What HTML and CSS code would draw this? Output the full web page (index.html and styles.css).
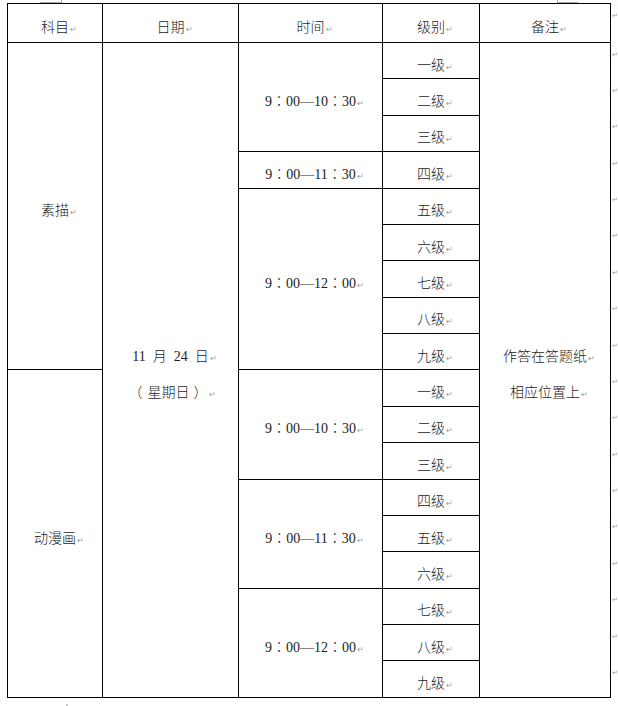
FILE: index.html
```html
<!DOCTYPE html>
<html lang="zh-CN">
<head>
<meta charset="utf-8">
<title>考试时间安排</title>
<link rel="stylesheet" href="styles.css">
</head>
<body>
<div class="page">
  <span class="corner corner-left"></span>
  <span class="corner corner-right"></span>
  <table class="grid">
    <colgroup>
      <col class="c-subject">
      <col class="c-date">
      <col class="c-time">
      <col class="c-level">
      <col class="c-note">
      <col class="c-eor">
    </colgroup>
    <tr class="head">
      <td><span class="t">科目</span></td>
      <td><span class="t">日期</span></td>
      <td><span class="t">时间</span></td>
      <td><span class="t">级别</span></td>
      <td><span class="t">备注</span></td>
      <td class="eor">↵</td>
    </tr>
    <tr class="r">
      <td rowspan="9"><span class="t">素描</span></td>
      <td rowspan="18" class="multi"><span class="t wide">11 月 24 日</span><br><span class="t"><span class="lp">（</span>星期日<span class="rp">）</span></span></td>
      <td rowspan="3"><span class="t punct">9：00—10：30</span></td>
      <td><span class="t">一级</span></td>
      <td rowspan="18" class="multi"><span class="t">作答在答题纸</span><br><span class="t">相应位置上</span></td>
      <td class="eor">↵</td>
    </tr>
    <tr class="r"><td><span class="t">二级</span></td><td class="eor">↵</td></tr>
    <tr class="r"><td><span class="t">三级</span></td><td class="eor">↵</td></tr>
    <tr class="r">
      <td><span class="t punct">9：00—11：30</span></td>
      <td><span class="t">四级</span></td>
      <td class="eor">↵</td>
    </tr>
    <tr class="r">
      <td rowspan="5"><span class="t punct">9：00—12：00</span></td>
      <td><span class="t">五级</span></td>
      <td class="eor">↵</td>
    </tr>
    <tr class="r"><td><span class="t">六级</span></td><td class="eor">↵</td></tr>
    <tr class="r"><td><span class="t">七级</span></td><td class="eor">↵</td></tr>
    <tr class="r"><td><span class="t">八级</span></td><td class="eor">↵</td></tr>
    <tr class="r"><td><span class="t">九级</span></td><td class="eor">↵</td></tr>
    <tr class="r">
      <td rowspan="9"><span class="t">动漫画</span></td>
      <td rowspan="3"><span class="t punct">9：00—10：30</span></td>
      <td><span class="t">一级</span></td>
      <td class="eor">↵</td>
    </tr>
    <tr class="r"><td><span class="t">二级</span></td><td class="eor">↵</td></tr>
    <tr class="r"><td><span class="t">三级</span></td><td class="eor">↵</td></tr>
    <tr class="r">
      <td rowspan="3"><span class="t punct">9：00—11：30</span></td>
      <td><span class="t">四级</span></td>
      <td class="eor">↵</td>
    </tr>
    <tr class="r"><td><span class="t">五级</span></td><td class="eor">↵</td></tr>
    <tr class="r"><td><span class="t">六级</span></td><td class="eor">↵</td></tr>
    <tr class="r">
      <td rowspan="3"><span class="t punct">9：00—12：00</span></td>
      <td><span class="t">七级</span></td>
      <td class="eor">↵</td>
    </tr>
    <tr class="r"><td><span class="t">八级</span></td><td class="eor">↵</td></tr>
    <tr class="r"><td><span class="t">九级</span></td><td class="eor">↵</td></tr>
  </table>
  <span class="dot"></span>
</div>
</body>
</html>
```

FILE: styles.css
```css
html, body {
  margin: 0;
  padding: 0;
  background: #ffffff;
}

.page {
  position: relative;
  width: 618px;
  height: 706px;
  overflow: hidden;
  padding: 3px 0 0 7px;
  box-sizing: border-box;
  font-family: "Liberation Serif", "Noto Sans CJK SC", serif;
  font-size: 14px;
  color: #1c1c1c;
}

.grid {
  border-collapse: collapse;
  table-layout: fixed;
  width: 610px;
}

.c-subject { width: 95px; }
.c-date { width: 136px; }
.c-time { width: 144px; }
.c-level { width: 97px; }
.c-note { width: 131px; }
.c-eor { width: 7px; }

.grid td {
  border: 1px solid #000;
  text-align: center;
  vertical-align: middle;
  padding: 10px 0 0 0;
  line-height: 20px;
  white-space: nowrap;
}

.grid td.multi {
  line-height: 36px;
}

.head { height: 39px; }
.r { height: 36.39px; }

.t {
  position: relative;
  font-weight: 300;
}

.punct {
  font-family: "Liberation Serif", "Noto Sans CJK TC", "Noto Sans CJK SC", serif;
}

.wide {
  word-spacing: 3.5px;
}

.lp {
  position: relative;
  left: -5px;
}

.rp {
  position: relative;
  left: 4px;
  margin-right: 4px;
}

.t::after {
  content: "↵";
  position: absolute;
  left: 100%;
  bottom: 1px;
  margin-left: 1px;
  font-family: "DejaVu Sans", sans-serif;
  font-size: 8px;
  line-height: 8px;
  color: #9a9a9a;
}

.grid td.eor {
  border: none;
  text-align: left;
  vertical-align: top;
  padding: 8px 0 0 1px;
  font-family: "DejaVu Sans", sans-serif;
  font-size: 7px;
  line-height: 8px;
  color: #9a9a9a;
  overflow: visible;
}

.corner {
  position: absolute;
  top: 0;
  height: 2px;
  border-bottom: 1px solid #a8a8a8;
}

.corner-left {
  left: 40px;
  width: 21px;
  border-right: 1px solid #a8a8a8;
}

.corner-right {
  left: 557px;
  width: 20px;
  border-left: 1px solid #a8a8a8;
}

.dot {
  position: absolute;
  left: 66px;
  top: 704px;
  width: 2px;
  height: 2px;
  background: #c8c8c8;
}
```
